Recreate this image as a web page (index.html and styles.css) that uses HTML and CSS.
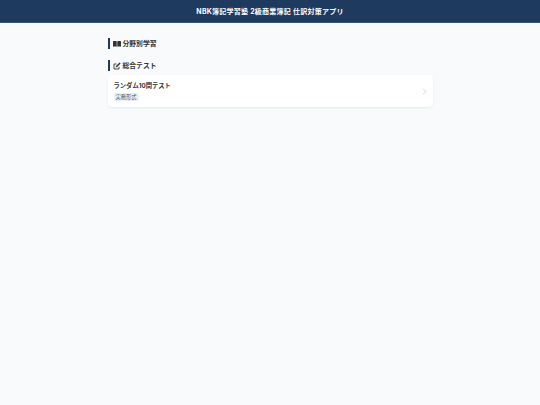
FILE: index.html
```html
<!DOCTYPE html>
<html lang="ja">
<head>
    <meta charset="UTF-8" />
    <meta name="viewport" content="width=device-width, initial-scale=1.0"/>
    <title>NBK簿記学習塾 2級商業簿記 仕訳対策アプリ</title>
    <link rel="stylesheet" href="styles.css">
</head>
<body>
<header class="app-header">NBK簿記学習塾 2級商業簿記 仕訳対策アプリ</header>

<main class="container">
    <h2 class="section-title">
        <svg class="section-icon" viewBox="0 0 16 16" aria-hidden="true">
            <path fill="currentColor" d="M0 2.4C1.6 1.6 5 1.5 7.4 2.4V13.6C5 12.8 1.6 12.9 0 13.6Z"/>
            <path fill="currentColor" d="M8.6 2.4C11 1.5 14.4 1.6 16 2.4V13.6C14.4 12.9 11 12.8 8.6 13.6Z"/>
        </svg>
        分野別学習
    </h2>

    <h2 class="section-title section-title-test">
        <svg class="section-icon" viewBox="0 0 16 16" aria-hidden="true">
            <path fill="none" stroke="currentColor" stroke-width="1.8" d="M12 9.5V14H2V4H7"/>
            <path fill="currentColor" d="M13 1L15.2 3.2L8.2 10.2L5.4 10.8L6 8Z"/>
        </svg>
        総合テスト
    </h2>

    <div class="test-card">
        <div class="test-info">
            <div class="test-name">ランダム10問テスト</div>
            <span class="tag">実務形式</span>
        </div>
        <svg class="chevron" viewBox="0 0 8 12" aria-hidden="true">
            <path fill="none" stroke="currentColor" stroke-width="1.6" d="M1.5 1L6.5 6L1.5 11"/>
        </svg>
    </div>
</main>
</body>
</html>
```

FILE: styles.css
```css
body {
    margin: 0;
    min-height: 100vh;
    background-color: #f8fafc;
    color: #333;
    font-family: Inter, "Noto Sans CJK JP", sans-serif;
}

.app-header {
    height: 23px;
    padding-top: 1px;
    line-height: 22px;
    background-color: #1e3a5f;
    border-bottom: 1px solid #3a5275;
    box-sizing: border-box;
    color: white;
    font-size: 7px;
    font-weight: 700;
    letter-spacing: 0.035em;
    text-align: center;
}

.container {
    width: 325px;
    margin: 0 auto;
    padding-top: 15px;
}

.section-title {
    display: flex;
    align-items: center;
    gap: 2px;
    height: 11px;
    margin: 0;
    border-left: 2px solid #1e3a5f;
    padding-left: 3px;
    color: #333;
    font-size: 6.8px;
    font-weight: 700;
    line-height: 11px;
}

.section-icon {
    width: 8px;
    height: 8px;
}

.section-title-test {
    margin-top: 11px;
}

.test-card {
    display: flex;
    align-items: center;
    justify-content: space-between;
    height: 32px;
    margin-top: 4px;
    padding: 0 6px;
    background-color: white;
    border-radius: 4px;
    box-shadow: 0 1px 2px rgba(30, 58, 95, 0.08);
}

.test-info {
    display: flex;
    flex-direction: column;
    align-items: flex-start;
    gap: 2px;
}

.test-name {
    font-size: 6.3px;
    font-weight: 700;
    line-height: 9px;
}

.tag {
    padding: 0 2px;
    background-color: #e8f0f8;
    border-radius: 2px;
    color: #555;
    font-size: 5.25px;
    line-height: 8px;
}

.chevron {
    width: 5px;
    height: 7px;
    color: #cbd5e1;
}
```
